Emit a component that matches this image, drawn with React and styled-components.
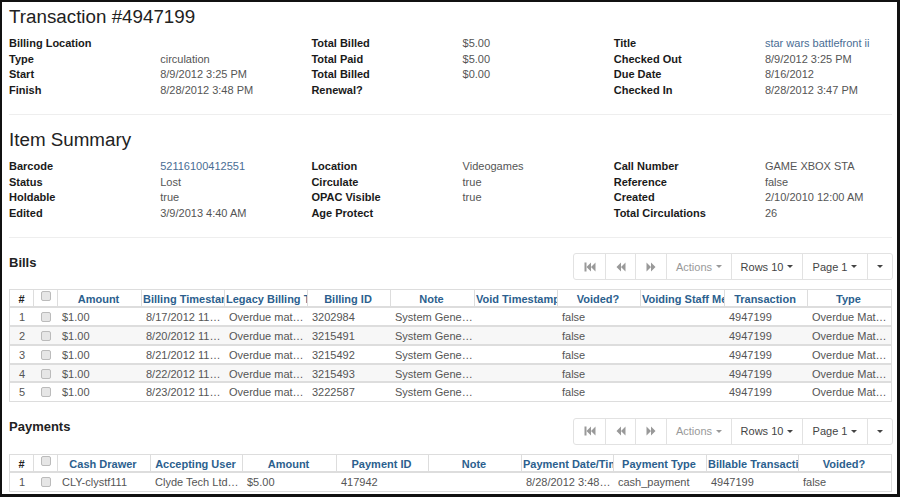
import styled, { createGlobalStyle } from "styled-components";

const GlobalStyle = createGlobalStyle`
  html, body {
    margin: 0;
    padding: 0;
    background: #000;
  }
  body {
    font-family: "Liberation Sans", Arial, sans-serif;
    font-size: 11px;
    color: #555;
    overflow: hidden;
  }
`;

const Frame = styled.div`
  width: 900px;
  height: 497px;
  box-sizing: border-box;
  background: #fff;
  border: solid #111;
  border-width: 2px 3px 3px 2px;
  padding: 0 4px 0 7px;
  overflow: hidden;
`;

const Heading = styled.h2`
  margin: 0;
  font-size: 18.8px;
  font-weight: 400;
  line-height: 24px;
  color: #222;
  padding-top: ${(p) => p.$top}px;
  height: 24px;
`;

const InfoGrid = styled.div`
  display: grid;
  grid-template-columns: repeat(6, 151.2px);
  grid-auto-rows: 15.67px;
  margin-top: ${(p) => p.$top}px;
  line-height: 15.67px;
  white-space: nowrap;
`;

const Label = styled.div`
  font-weight: 700;
  color: #1a1a1a;
`;

const Value = styled.div`
  color: #555;
`;

const ValueLink = styled(Value)`
  color: #4a6d94;
`;

const Rule = styled.hr`
  margin: ${(p) => p.$top}px 0 0;
  width: 883px;
  border: 0;
  border-top: 1px solid #eee;
`;

const SectionHead = styled.div`
  display: flex;
  justify-content: space-between;
  align-items: flex-start;
  width: 884px;
  margin-top: ${(p) => p.$top}px;
  height: 27px;
`;

const SectionTitle = styled.h4`
  margin: 0;
  padding-top: ${(p) => p.$pad}px;
  font-size: 13px;
  line-height: 16px;
  font-weight: 700;
  color: #222;
`;

const BtnGroup = styled.div`
  display: flex;
  height: 27px;
  box-sizing: border-box;
  border: 1px solid #e2e2e2;
  border-radius: 3px;
`;

const Btn = styled.div`
  width: ${(p) => p.$w}px;
  box-sizing: border-box;
  display: flex;
  align-items: center;
  justify-content: center;
  gap: 4px;
  color: ${(p) => (p.$off ? "#999" : "#444")};
  border-left: ${(p) => (p.$first ? "0" : "1px solid #e2e2e2")};
`;

const Caret = styled.span`
  width: 0;
  height: 0;
  border-left: 3.5px solid transparent;
  border-right: 3.5px solid transparent;
  border-top: 3.5px solid currentColor;
`;

const Grid = styled.div`
  width: 883px;
  margin-top: ${(p) => p.$top}px;
  border: 1px solid #ddd;
  box-sizing: border-box;
`;

const Row = styled.div`
  display: grid;
  grid-template-columns: ${(p) => p.$cols};
  height: ${(p) => (p.$last ? 18 : 18.8)}px;
  box-sizing: border-box;
  border-bottom: ${(p) => (p.$last ? "0" : "2px solid #ddd")};
  background: ${(p) => (p.$odd ? "#f7f7f7" : "#fff")};
  line-height: 18px;
`;

const HeadRow = styled(Row)`
  height: 18px;
  line-height: 17px;
`;

const HeadCell = styled.div`
  box-sizing: border-box;
  height: 16px;
  padding: 1px 3px 0 1px;
  text-align: center;
  font-weight: 700;
  color: #2c5f8e;
  white-space: nowrap;
  overflow: hidden;
  border-right: ${(p) => (p.$end ? "0" : "1px solid #ddd")};
`;

const HashCell = styled(HeadCell)`
  padding: 1px 0 0;
  color: #222;
`;

const CheckHeadCell = styled(HeadCell)`
  padding: 0;
`;

const Cell = styled.div`
  box-sizing: border-box;
  height: 18px;
  padding: 0 ${(p) => (p.$center ? 0 : 2)}px 0 ${(p) => (p.$center ? 0 : 4)}px;
  text-align: ${(p) => (p.$center ? "center" : "left")};
  white-space: nowrap;
  overflow: hidden;
  text-overflow: ellipsis;
  color: #555;
`;

const Check = styled.input.attrs({ type: "checkbox" })`
  appearance: none;
  display: inline-block;
  width: 10px;
  height: 10px;
  margin: 0;
  box-sizing: border-box;
  background: #e6e6e6;
  border: 1px solid #bbb;
  border-radius: 2px;
  vertical-align: -1px;
`;

const HeadCheck = styled(Check)`
  vertical-align: 1px;
`;

const FirstIcon = () => (
  <svg width="12" height="10" viewBox="0 0 12 10" fill="currentColor">
    <rect x="0.5" y="0.5" width="2" height="9" />
    <path d="M7 0.5v9L2.5 5zM11.5 0.5v9L7 5z" />
  </svg>
);

const PrevIcon = () => (
  <svg width="10" height="10" viewBox="0 0 10 10" fill="currentColor">
    <path d="M5 0.5v9L0.5 5zM9.5 0.5v9L5 5z" />
  </svg>
);

const NextIcon = () => (
  <svg width="10" height="10" viewBox="0 0 10 10" fill="currentColor">
    <path d="M5 0.5v9L9.5 5zM0.5 0.5v9L5 5z" />
  </svg>
);

const Toolbar = () => (
  <BtnGroup>
    <Btn $w={31} $first $off><FirstIcon /></Btn>
    <Btn $w={30} $off><PrevIcon /></Btn>
    <Btn $w={31} $off><NextIcon /></Btn>
    <Btn $w={65} $off>Actions <Caret /></Btn>
    <Btn $w={71}>Rows 10 <Caret /></Btn>
    <Btn $w={65}>Page 1 <Caret /></Btn>
    <Btn $w={25}><Caret /></Btn>
  </BtnGroup>
);

const transactionInfo = [
  ["Billing Location", "", "Total Billed", "$5.00", "Title", "star wars battlefront ii"],
  ["Type", "circulation", "Total Paid", "$5.00", "Checked Out", "8/9/2012 3:25 PM"],
  ["Start", "8/9/2012 3:25 PM", "Total Billed", "$0.00", "Due Date", "8/16/2012"],
  ["Finish", "8/28/2012 3:48 PM", "Renewal?", "", "Checked In", "8/28/2012 3:47 PM"],
];

const itemInfo = [
  ["Barcode", "52116100412551", "Location", "Videogames", "Call Number", "GAME XBOX STA"],
  ["Status", "Lost", "Circulate", "true", "Reference", "false"],
  ["Holdable", "true", "OPAC Visible", "true", "Created", "2/10/2010 12:00 AM"],
  ["Edited", "3/9/2013 4:40 AM", "Age Protect", "", "Total Circulations", "26"],
];

const linkValues = ["star wars battlefront ii", "52116100412551"];

const billCols = "24px 24px 84px 83px 83px 83px 84px 83px 83px 84px 83px 1fr";
const billHead = [
  "Amount", "Billing Timestamp", "Legacy Billing Type", "Billing ID", "Note",
  "Void Timestamp", "Voided?", "Voiding Staff Member", "Transaction", "Type",
];
const bills = [
  ["$1.00", "8/17/2012 11:00 PM", "Overdue materials", "3202984", "System Generated"],
  ["$1.00", "8/20/2012 11:00 PM", "Overdue materials", "3215491", "System Generated"],
  ["$1.00", "8/21/2012 11:00 PM", "Overdue materials", "3215492", "System Generated"],
  ["$1.00", "8/22/2012 11:00 PM", "Overdue materials", "3215493", "System Generated"],
  ["$1.00", "8/23/2012 11:00 PM", "Overdue materials", "3222587", "System Generated"],
].map((b) => [...b, "", "false", "", "4947199", "Overdue Materials"]);

const payCols = "24px 24px 93px 92px 94px 92px 93px 92px 93px 92px 1fr";
const payHead = [
  "Cash Drawer", "Accepting User", "Amount", "Payment ID", "Note",
  "Payment Date/Time", "Payment Type", "Billable Transaction", "Voided?",
];
const payments = [
  ["CLY-clystf111", "Clyde Tech Ltd. Staff", "$5.00", "417942", "", "8/28/2012 3:48 PM", "cash_payment", "4947199", "false"],
];

const Info = ({ rows, top }) => (
  <InfoGrid $top={top}>
    {rows.flat().map((text, i) => {
      if (i % 2 === 0) return <Label key={i}>{text}</Label>;
      if (linkValues.includes(text)) return <ValueLink key={i}>{text}</ValueLink>;
      return <Value key={i}>{text}</Value>;
    })}
  </InfoGrid>
);

const DataGrid = ({ cols, head, rows, top }) => (
  <Grid $top={top}>
    <HeadRow $cols={cols}>
      <HashCell>#</HashCell>
      <CheckHeadCell><HeadCheck /></CheckHeadCell>
      {head.map((h, i) => (
        <HeadCell key={h} $end={i === head.length - 1}>{h}</HeadCell>
      ))}
    </HeadRow>
    {rows.map((row, r) => (
      <Row key={r} $cols={cols} $odd={r % 2 === 1} $last={r === rows.length - 1}>
        <Cell $center>{r + 1}</Cell>
        <Cell $center><Check /></Cell>
        {row.map((text, i) => <Cell key={i}>{text}</Cell>)}
      </Row>
    ))}
  </Grid>
);

const App = () => (
  <>
    <GlobalStyle />
    <Frame>
      <Heading $top={3}>Transaction #4947199</Heading>
      <Info rows={transactionInfo} top={7} />
      <Rule $top={15} />
      <Heading $top={13}>Item Summary</Heading>
      <Info rows={itemInfo} top={7.4} />
      <Rule $top={15.6} />
      <SectionHead $top={15}>
        <SectionTitle $pad={2}>Bills</SectionTitle>
        <Toolbar />
      </SectionHead>
      <DataGrid cols={billCols} head={billHead} rows={bills} top={9} />
      <SectionHead $top={15.5}>
        <SectionTitle $pad={1}>Payments</SectionTitle>
        <Toolbar />
      </SectionHead>
      <DataGrid cols={payCols} head={payHead} rows={payments} top={9} />
    </Frame>
  </>
);

export default App;
